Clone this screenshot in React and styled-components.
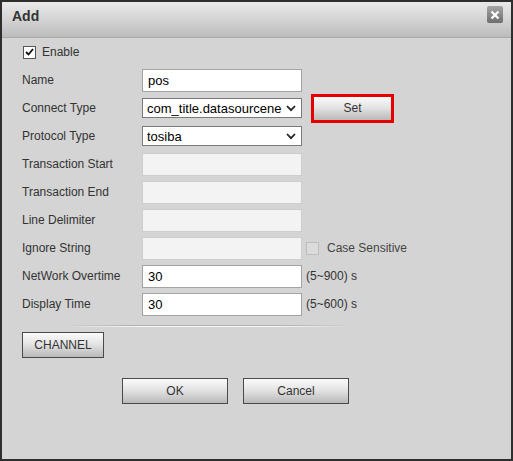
import React from "react";
import styled, { createGlobalStyle } from "styled-components";

const Global = createGlobalStyle`
  html, body { margin: 0; padding: 0; background: #2e2e2e; }
  body { font-family: "Liberation Sans", Arial, sans-serif; }
`;

const Dialog = styled.div`
  box-sizing: border-box;
  width: 513px;
  height: 461px;
  border: 2px solid #2e2e2e;
  background: #d4d4d4;
  display: flex;
  flex-direction: column;
`;

const TitleBar = styled.div`
  box-sizing: border-box;
  height: 36px;
  border-bottom: 1px solid #a8a8a8;
  background: linear-gradient(to bottom, #e9e9e9 0%, #d6d6d6 45%, #bcbcbc 100%);
  display: flex;
  justify-content: space-between;
  align-items: flex-start;
  padding: 5px 8px 0 10px;
`;

const Title = styled.div`
  font-size: 14px;
  font-weight: bold;
  color: #333;
  line-height: 18px;
`;

const CloseBtn = styled.div`
  width: 16px;
  height: 17px;
  margin-top: -1px;
  border-radius: 2px;
  background: linear-gradient(to bottom, #a5a5a5, #6e6e6e);
  display: flex;
  align-items: center;
  justify-content: center;
`;

const Body = styled.div`
  padding: 0 0 0 20px;
  display: flex;
  flex-direction: column;
`;

const Row = styled.div`
  height: 28px;
  display: flex;
  align-items: center;
  font-size: 12px;
  color: #333;
`;

const Label = styled.div`
  width: 120px;
  flex: none;
`;

const Check = styled.div`
  box-sizing: border-box;
  width: 13px;
  height: 13px;
  margin-left: ${(p) => p.$ml || 0}px;
  margin-right: ${(p) => p.$mr || 6}px;
  border: 1px solid ${(p) => (p.$disabled ? "#bdbdbd" : "#555")};
  background: ${(p) => (p.$disabled ? "#dcdcdc" : "#fff")};
  display: flex;
  align-items: center;
  justify-content: center;
`;

const CheckText = styled.span`
  color: ${(p) => (p.$disabled ? "#444" : "#333")};
`;

const Field = styled.div`
  box-sizing: border-box;
  width: 160px;
  height: 23px;
  border: 1px solid ${(p) => (p.$disabled ? "#cdcdcd" : "#a3a3a3")};
  background: ${(p) => (p.$disabled ? "#f3f3f3" : "#fff")};
  padding: 0 5px;
  font-size: 13px;
  color: #000;
  display: flex;
  align-items: center;
`;

const SelectBox = styled.div`
  box-sizing: border-box;
  width: 160px;
  height: 20px;
  border: 1px solid #7a7a7a;
  background: #fff;
  padding: 0 5px 0 4px;
  font-size: 13px;
  color: #000;
  display: flex;
  align-items: center;
  justify-content: space-between;
`;

const SelectText = styled.span`
  white-space: nowrap;
`;

const Unit = styled.span`
  margin-left: 4px;
  font-size: 12px;
  color: #333;
`;

const Button = styled.button`
  box-sizing: border-box;
  width: ${(p) => p.$w}px;
  height: ${(p) => p.$h || 26}px;
  border: ${(p) => (p.$focus ? "3px solid #e60000" : "1px solid #4a4a4a")};
  background: linear-gradient(to bottom, #fbfbfb 0%, #e4e4e4 45%, #b9b9b9 100%);
  font-family: "Liberation Sans", Arial, sans-serif;
  font-size: 12px;
  color: #333;
  padding: 0;
  margin-left: ${(p) => p.$ml || 0}px;
  cursor: pointer;
`;

const Separator = styled.div`
  margin: 7px 0 0 40px;
  width: 290px;
  height: 2px;
  background:
    linear-gradient(to right, rgba(212,212,212,1), rgba(212,212,212,0) 25%, rgba(212,212,212,0) 75%, rgba(212,212,212,1)),
    linear-gradient(to bottom, #b0b0b0 0, #b0b0b0 1px, #f4f4f4 1px, #f4f4f4 2px);
`;

const ChannelRow = styled.div`
  margin-top: 5px;
  display: flex;
`;

const Footer = styled.div`
  margin-top: 20px;
  padding-left: 100px;
  display: flex;
  gap: 15px;
`;

const Chevron = () => (
  <svg width="10" height="7" viewBox="0 0 10 7">
    <path d="M1 1 L5 5.2 L9 1" fill="none" stroke="#222" strokeWidth="1.8" />
  </svg>
);

const Tick = () => (
  <svg width="9" height="8" viewBox="0 0 9 8">
    <path d="M1 4 L3.5 6.5 L8 1" fill="none" stroke="#111" strokeWidth="1.8" />
  </svg>
);

const rowsDisabled = ["Transaction Start", "Transaction End", "Line Delimiter"];

export default function App() {
  return (
    <>
      <Global />
      <Dialog>
        <TitleBar>
          <Title>Add</Title>
          <CloseBtn>
            <svg width="10" height="10" viewBox="0 0 10 10">
              <path d="M1.5 1.5 L8.5 8.5 M8.5 1.5 L1.5 8.5" stroke="#fff" strokeWidth="2.2" />
            </svg>
          </CloseBtn>
        </TitleBar>
        <Body>
          <Row>
            <Check $ml={1}>
              <Tick />
            </Check>
            <CheckText>Enable</CheckText>
          </Row>
          <Row>
            <Label>Name</Label>
            <Field>pos</Field>
          </Row>
          <Row>
            <Label>Connect Type</Label>
            <SelectBox>
              <SelectText>com_title.datasourcene</SelectText>
              <Chevron />
            </SelectBox>
            <Button $w={83} $h={29} $focus $ml={9}>Set</Button>
          </Row>
          <Row>
            <Label>Protocol Type</Label>
            <SelectBox>
              <SelectText>tosiba</SelectText>
              <Chevron />
            </SelectBox>
          </Row>
          {rowsDisabled.map((l) => (
            <Row key={l}>
              <Label>{l}</Label>
              <Field $disabled />
            </Row>
          ))}
          <Row>
            <Label>Ignore String</Label>
            <Field $disabled />
            <Check $disabled $ml={4} $mr={8} />
            <CheckText $disabled>Case Sensitive</CheckText>
          </Row>
          <Row>
            <Label>NetWork Overtime</Label>
            <Field>30</Field>
            <Unit>(5~900) s</Unit>
          </Row>
          <Row>
            <Label>Display Time</Label>
            <Field>30</Field>
            <Unit>(5~600) s</Unit>
          </Row>
          <Separator />
          <ChannelRow>
            <Button $w={82}>CHANNEL</Button>
          </ChannelRow>
          <Footer>
            <Button $w={106}>OK</Button>
            <Button $w={106}>Cancel</Button>
          </Footer>
        </Body>
      </Dialog>
    </>
  );
}
